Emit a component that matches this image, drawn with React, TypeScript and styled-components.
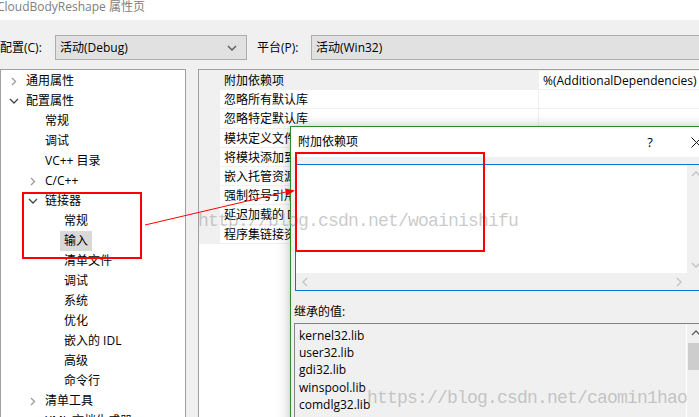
import React from "react";
import styled, { createGlobalStyle } from "styled-components";

const GlobalStyle = createGlobalStyle`
  html, body { margin: 0; padding: 0; background: #f0f0f0; }
  body {
    font-family: "Open Sans", "Noto Sans CJK SC", sans-serif;
    font-size: 12px;
    color: #000;
  }
  * { box-sizing: border-box; }
`;

const Window = styled.div`
  position: relative;
  width: 699px;
  height: 417px;
  overflow: hidden;
  background: #f0f0f0;
  display: flex;
  flex-direction: column;
`;

const TitleBar = styled.div`
  flex: none;
  height: 20px;
  background: #fff;
  color: #808080;
  font-size: 12px;
  line-height: 14px;
  white-space: nowrap;
  text-indent: -3px;
`;

const ConfigRow = styled.div`
  flex: none;
  display: flex;
  align-items: center;
  height: 25px;
  margin: 15px 0 9px;
`;

const FieldLabel = styled.span<{ $w: number }>`
  flex: none;
  width: ${(p) => p.$w}px;
  line-height: 25px;
  white-space: nowrap;
`;

const Combo = styled.div<{ $w?: number }>`
  flex: ${(p) => (p.$w ? "none" : "1")};
  width: ${(p) => (p.$w ? `${p.$w}px` : "auto")};
  margin-right: ${(p) => (p.$w ? "10px" : "-20px")};
  height: 25px;
  border: 1px solid #adadad;
  background: #e1e1e1;
  display: flex;
  align-items: center;
  padding: 0 9px 0 4px;
  white-space: nowrap;
`;

const ComboText = styled.span`
  flex: 1;
  line-height: 23px;
`;

const Body = styled.div`
  flex: none;
  height: 400px;
  display: flex;
  gap: 12px;
`;

const TreePanel = styled.div`
  flex: none;
  width: 186px;
  border: 1px solid #a0a0a0;
  background: #fff;
  padding-top: 1px;
`;

const TreeRow = styled.div<{ $level: number }>`
  display: flex;
  align-items: center;
  height: 20px;
  padding-left: ${(p) => 6 + p.$level * 19}px;
`;

const ArrowSlot = styled.span`
  flex: none;
  width: 14px;
  height: 20px;
  display: flex;
  align-items: center;
  justify-content: center;
`;

const TreeLabel = styled.span<{ $selected?: boolean }>`
  margin-left: 1px;
  padding: 0 4px;
  line-height: 20px;
  white-space: nowrap;
  background: ${(p) => (p.$selected ? "#d9d9d9" : "transparent")};
`;

const GridPanel = styled.div`
  flex: 1;
  margin-right: -20px;
  border: 1px solid #a0a0a0;
  background: #fff;
`;

const RowsBlock = styled.div`
  display: flex;
  flex-direction: column;
  gap: 1px;
  padding: 1px 0 1px 21px;
  background: #f0f0f0;
`;

const PropRow = styled.div`
  display: grid;
  grid-template-columns: 318px 1fr;
  column-gap: 1px;
  height: 18.2px;
`;

const PropCell = styled.div<{ $selected?: boolean }>`
  background: ${(p) => (p.$selected ? "#f0f0f0" : "#fff")};
  padding-left: 4px;
  line-height: 19px;
  white-space: nowrap;
  overflow: hidden;
`;

const Dialog = styled.div`
  position: absolute;
  left: 290px;
  top: 126px;
  width: 430px;
  height: 320px;
  border: 1px solid #2b8a2b;
  background: #f0f0f0;
  box-shadow: 0 1px 12px rgba(0, 0, 0, 0.28);
  display: flex;
  flex-direction: column;
`;

const DialogTitle = styled.div`
  flex: none;
  height: 30px;
  background: #fff;
  display: flex;
  align-items: center;
  padding-left: 7px;
`;

const DialogTitleText = styled.span`
  flex: 1;
  line-height: 16px;
`;

const CaptionButton = styled.span`
  flex: none;
  width: 46px;
  height: 30px;
  display: flex;
  align-items: center;
  justify-content: center;
  font-size: 13px;
`;

const DialogClient = styled.div`
  flex: 1;
  padding: 7px 14px 0 4px;
  display: flex;
  flex-direction: column;
`;

const EditBox = styled.div`
  height: 127px;
  border: 1px solid #0078d7;
  display: grid;
  grid-template-columns: 1fr 17px;
  grid-template-rows: 1fr 17px;
`;

const EditArea = styled.div`
  background: #fff;
`;

const VScroll = styled.div`
  background: #f0f0f0;
  display: flex;
  flex-direction: column;
  justify-content: space-between;
  align-items: center;
`;

const HScroll = styled.div`
  background: #f0f0f0;
  display: flex;
  justify-content: space-between;
  align-items: center;
`;

const ScrollBtn = styled.span`
  width: 17px;
  height: 17px;
  display: flex;
  align-items: center;
  justify-content: center;
`;

const Corner = styled.div`
  background: #f0f0f0;
`;

const SectionLabel = styled.div`
  margin-top: 12px;
  line-height: 17px;
  margin-left: -1px;
`;

const ListBox = styled.div`
  margin-top: 3px;
  margin-left: -1px;
  height: 120px;
  border: 1px solid #838383;
  background: #f0f0f0;
  display: grid;
  grid-template-columns: 1fr 17px;
`;

const ListItems = styled.div`
  padding: 3px 0 0 4px;
  border-right: 1px solid #fff;
`;

const ListItem = styled.div`
  line-height: 17.2px;
  white-space: nowrap;
`;

const ListScroll = styled.div`
  display: flex;
  flex-direction: column;
  background: #f0f0f0;
`;

const Thumb = styled.div`
  margin: 2px 0 0 1px;
  height: 27px;
  background: #cdcdcd;
`;

const Watermark = styled.div<{ $x: number; $y: number }>`
  position: absolute;
  left: ${(p) => p.$x}px;
  top: ${(p) => p.$y}px;
  font-family: "Liberation Mono", monospace;
  font-size: 18px;
  letter-spacing: -0.8px;
  line-height: 18px;
  color: rgba(150, 150, 150, 0.5);
  white-space: nowrap;
  pointer-events: none;
`;

const Annotations = styled.svg`
  position: absolute;
  left: 0;
  top: 0;
  pointer-events: none;
`;

const Chevron = ({ dir, color, size = 8 }: { dir: "right" | "down" | "up" | "left"; color: string; size?: number }) => {
  const h = size / 2;
  const pts: Record<string, string> = {
    right: `1,1 ${h + 1},${h + 1} 1,${size + 1}`,
    left: `${h + 1},1 1,${h + 1} ${h + 1},${size + 1}`,
    down: `1,1 ${h + 1},${h + 1} ${size + 1},1`,
    up: `1,${h + 1} ${h + 1},1 ${size + 1},${h + 1}`,
  };
  const horiz = dir === "down" || dir === "up";
  return (
    <svg width={horiz ? size + 2 : h + 2} height={horiz ? h + 2 : size + 2}>
      <polyline points={pts[dir]} fill="none" stroke={color} strokeWidth={1.3} />
    </svg>
  );
};

type TreeNode = { label: string; level: number; arrow?: "open" | "closed"; selected?: boolean };

const tree: TreeNode[] = [
  { label: "通用属性", level: 0, arrow: "closed" },
  { label: "配置属性", level: 0, arrow: "open" },
  { label: "常规", level: 1 },
  { label: "调试", level: 1 },
  { label: "VC++ 目录", level: 1 },
  { label: "C/C++", level: 1, arrow: "closed" },
  { label: "链接器", level: 1, arrow: "open" },
  { label: "常规", level: 2 },
  { label: "输入", level: 2, selected: true },
  { label: "清单文件", level: 2 },
  { label: "调试", level: 2 },
  { label: "系统", level: 2 },
  { label: "优化", level: 2 },
  { label: "嵌入的 IDL", level: 2 },
  { label: "高级", level: 2 },
  { label: "命令行", level: 2 },
  { label: "清单工具", level: 1, arrow: "closed" },
  { label: "XML 文档生成器", level: 1, arrow: "closed" },
];

const props: [string, string][] = [
  ["附加依赖项", "%(AdditionalDependencies)"],
  ["忽略所有默认库", ""],
  ["忽略特定默认库", ""],
  ["模块定义文件", ""],
  ["将模块添加到程序集", ""],
  ["嵌入托管资源文件", ""],
  ["强制符号引用", ""],
  ["延迟加载的 DLL", ""],
  ["程序集链接资源", ""],
];

const libs = ["kernel32.lib", "user32.lib", "gdi32.lib", "winspool.lib", "comdlg32.lib"];

export default function App() {
  return (
    <>
      <GlobalStyle />
      <Window>
        <TitleBar>CloudBodyReshape 属性页</TitleBar>
        <ConfigRow>
          <FieldLabel $w={55}>配置(C):</FieldLabel>
          <Combo $w={192}>
            <ComboText>活动(Debug)</ComboText>
            <Chevron dir="down" color="#555" size={8} />
          </Combo>
          <FieldLabel $w={54}>平台(P):</FieldLabel>
          <Combo>
            <ComboText>活动(Win32)</ComboText>
          </Combo>
        </ConfigRow>
        <Body>
          <TreePanel>
            {tree.map((n, i) => (
              <TreeRow key={i} $level={n.level}>
                <ArrowSlot>
                  {n.arrow === "closed" && <Chevron dir="right" color="#9a9a9a" size={7} />}
                  {n.arrow === "open" && <Chevron dir="down" color="#444" size={8} />}
                </ArrowSlot>
                <TreeLabel $selected={n.selected}>{n.label}</TreeLabel>
              </TreeRow>
            ))}
          </TreePanel>
          <GridPanel>
            <RowsBlock>
              {props.map(([name, value], i) => (
                <PropRow key={i}>
                  <PropCell $selected={i === 0}>{name}</PropCell>
                  <PropCell>{value}</PropCell>
                </PropRow>
              ))}
            </RowsBlock>
          </GridPanel>
        </Body>

        <Dialog>
          <DialogTitle>
            <DialogTitleText>附加依赖项</DialogTitleText>
            <CaptionButton>?</CaptionButton>
            <CaptionButton>
              <svg width="11" height="11">
                <path d="M0.5 0.5 L10.5 10.5 M10.5 0.5 L0.5 10.5" stroke="#111" strokeWidth="1" />
              </svg>
            </CaptionButton>
          </DialogTitle>
          <DialogClient>
            <EditBox>
              <EditArea />
              <VScroll>
                <ScrollBtn><Chevron dir="up" color="#c2c2c2" size={8} /></ScrollBtn>
                <ScrollBtn><Chevron dir="down" color="#c2c2c2" size={8} /></ScrollBtn>
              </VScroll>
              <HScroll>
                <ScrollBtn><Chevron dir="left" color="#c2c2c2" size={8} /></ScrollBtn>
                <ScrollBtn><Chevron dir="right" color="#c2c2c2" size={8} /></ScrollBtn>
              </HScroll>
              <Corner />
            </EditBox>
            <SectionLabel>继承的值:</SectionLabel>
            <ListBox>
              <ListItems>
                {libs.map((l) => (
                  <ListItem key={l}>{l}</ListItem>
                ))}
              </ListItems>
              <ListScroll>
                <ScrollBtn><Chevron dir="up" color="#606060" size={8} /></ScrollBtn>
                <Thumb />
              </ListScroll>
            </ListBox>
          </DialogClient>
        </Dialog>

        <Watermark $x={198} $y={212}>http://blog.csdn.net/woainishifu</Watermark>
        <Watermark $x={367} $y={389}>https://blog.csdn.net/caomin1hao</Watermark>

        <Annotations width={699} height={417} viewBox="0 0 699 417">
          <rect x={23} y={193} width={118} height={65} fill="none" stroke="#ff0000" strokeWidth={2} />
          <rect x={296} y={153} width={188} height={98} fill="none" stroke="#ff0000" strokeWidth={2} />
          <line x1={145} y1={225} x2={288} y2={191.5} stroke="#ff0000" strokeWidth={1} />
          <polygon points="285,188.5 295,190.5 287,195.5" fill="#ff0000" />
        </Annotations>
      </Window>
    </>
  );
}
